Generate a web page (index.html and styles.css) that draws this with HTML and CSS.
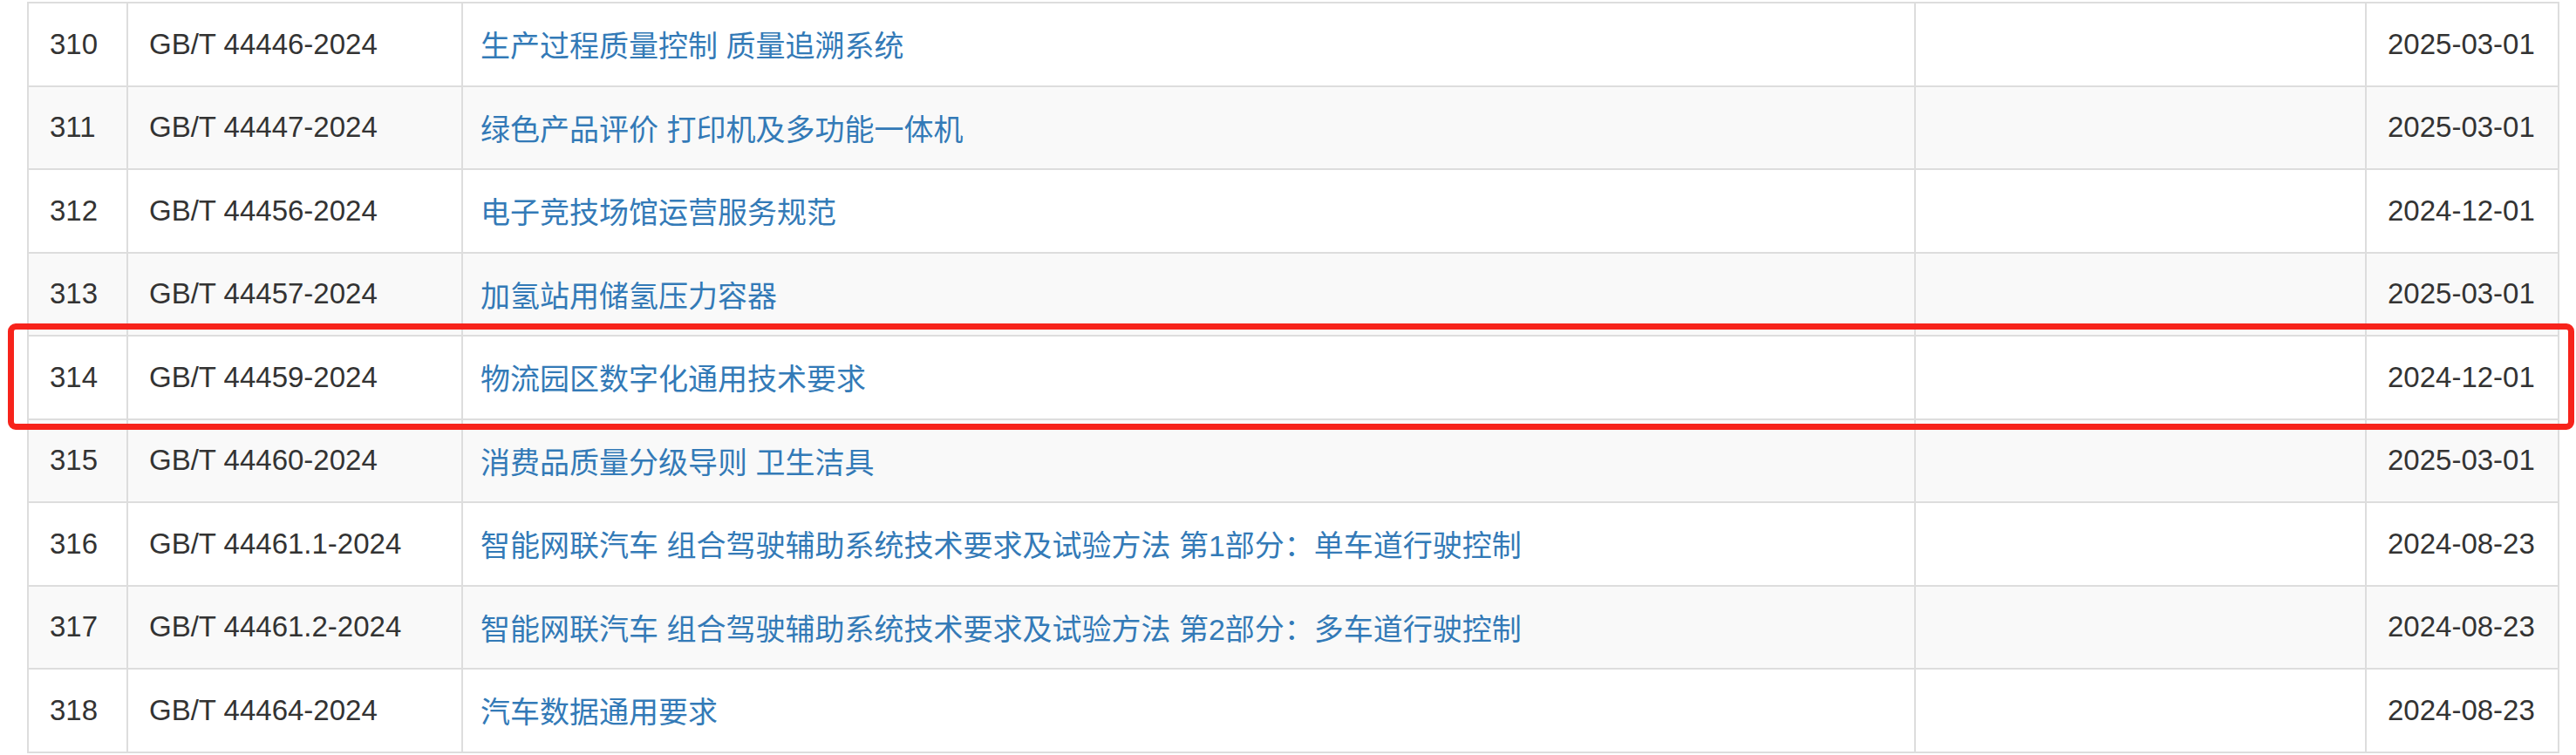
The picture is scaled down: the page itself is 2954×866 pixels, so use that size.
FILE: index.html
```html
<!DOCTYPE html>
<html>
    <head>
        <meta charset="UTF-8">
        <title>国家标准目录</title>
        <link rel="stylesheet" href="styles.css">
    </head>
    <body>
        <div class="sheet">
            <table class="std_list">
                <colgroup>
                    <col class="c_no">
                    <col class="c_code">
                    <col class="c_name">
                    <col class="c_note">
                    <col class="c_date">
                </colgroup>
                <tbody>
                    <tr>
                        <td>310</td>
                        <td>GB/T 44446-2024</td>
                        <td><a href="#">生产过程质量控制 质量追溯系统</a></td>
                        <td></td>
                        <td>2025-03-01</td>
                    </tr>
                    <tr>
                        <td>311</td>
                        <td>GB/T 44447-2024</td>
                        <td><a href="#">绿色产品评价 打印机及多功能一体机</a></td>
                        <td></td>
                        <td>2025-03-01</td>
                    </tr>
                    <tr>
                        <td>312</td>
                        <td>GB/T 44456-2024</td>
                        <td><a href="#">电子竞技场馆运营服务规范</a></td>
                        <td></td>
                        <td>2024-12-01</td>
                    </tr>
                    <tr>
                        <td>313</td>
                        <td>GB/T 44457-2024</td>
                        <td><a href="#">加氢站用储氢压力容器</a></td>
                        <td></td>
                        <td>2025-03-01</td>
                    </tr>
                    <tr>
                        <td>314</td>
                        <td>GB/T 44459-2024</td>
                        <td><a href="#">物流园区数字化通用技术要求</a></td>
                        <td></td>
                        <td>2024-12-01</td>
                    </tr>
                    <tr>
                        <td>315</td>
                        <td>GB/T 44460-2024</td>
                        <td><a href="#">消费品质量分级导则 卫生洁具</a></td>
                        <td></td>
                        <td>2025-03-01</td>
                    </tr>
                    <tr>
                        <td>316</td>
                        <td>GB/T 44461.1-2024</td>
                        <td><a href="#">智能网联汽车 组合驾驶辅助系统技术要求及试验方法 第1部分：单车道行驶控制</a></td>
                        <td></td>
                        <td>2024-08-23</td>
                    </tr>
                    <tr>
                        <td>317</td>
                        <td>GB/T 44461.2-2024</td>
                        <td><a href="#">智能网联汽车 组合驾驶辅助系统技术要求及试验方法 第2部分：多车道行驶控制</a></td>
                        <td></td>
                        <td>2024-08-23</td>
                    </tr>
                    <tr>
                        <td>318</td>
                        <td>GB/T 44464-2024</td>
                        <td><a href="#">汽车数据通用要求</a></td>
                        <td></td>
                        <td>2024-08-23</td>
                    </tr>
                </tbody>
            </table>
            <!-- highlight round row 314 -->
            <div class="mark"></div>
        </div>
    </body>
</html>
```

FILE: styles.css
```css
body {
    margin : 0;
    background : #fff;
    font-family : "Liberation Sans", "Noto Sans CJK SC", sans-serif;
    font-size : 33px;
    color : #333;
}
.sheet {
    position : relative;
    padding : 2px 0 0 31px;
}
.std_list {
    width : 2902px;
    table-layout : fixed;
    border-collapse : collapse;
}
.c_no {
    width : 114px;
}
.c_code {
    width : 384px;
}
.c_name {
    width : 1666px;
}
.c_note {
    width : 517px;
}
.c_date {
    width : 221px;
}
.std_list td {
    height : 93.5px;
    padding : 0 24px;
    border : 2px solid #ddd;
    vertical-align : middle;
    white-space : nowrap;
}
.std_list tr:nth-child(even) {
    background : #f9f9f9;
}
.std_list a {
    margin-left : -4px;
    font-size : 34px;
    color : #337ab7;
    text-decoration : none;
}
.mark {
    position : absolute;
    left : 9px;
    top : 371px;
    width : 2943px;
    height : 122px;
    box-sizing : border-box;
    border : 7px solid #f7231b;
    border-radius : 9px;
}
```
